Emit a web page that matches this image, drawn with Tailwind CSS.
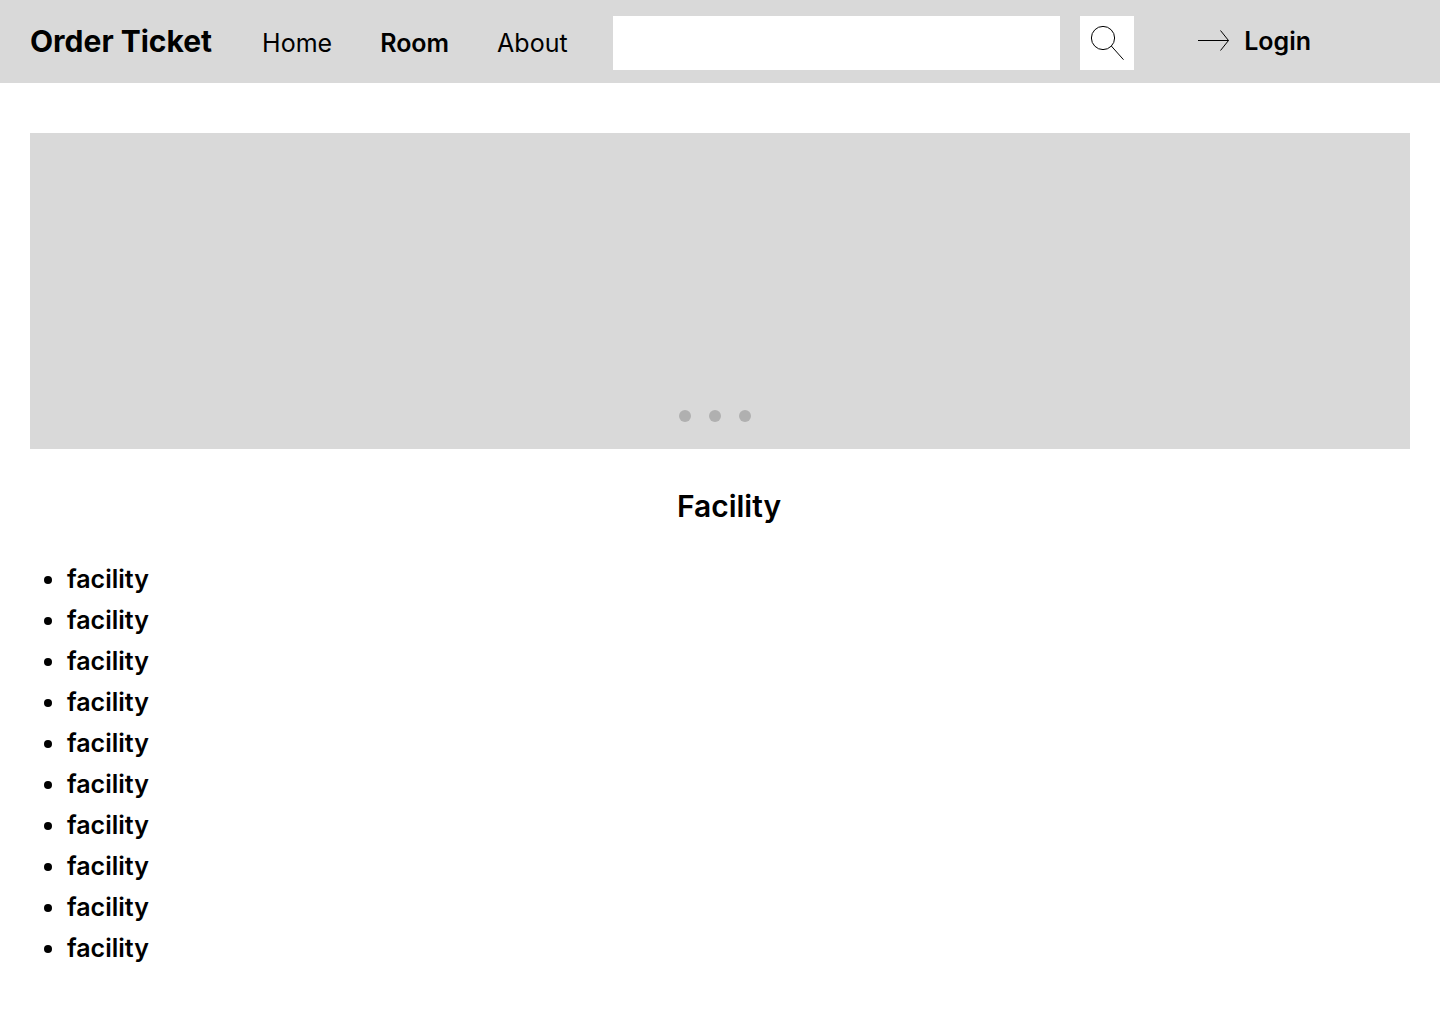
<!DOCTYPE html>
<html lang="en">
<head>
<meta charset="utf-8">
<meta name="viewport" content="width=device-width, initial-scale=1">
<title>Order Ticket</title>
<script src="https://cdn.jsdelivr.net/npm/@tailwindcss/browser@4"></script>
</head>
<body class="bg-white font-['Inter',sans-serif] text-black">
<header class="flex items-start bg-[#d9d9d9] pt-4 pb-[13px] pl-[30px] pr-[129px]">
  <a href="#" class="mt-[7px] shrink-0 text-[30px] leading-9 font-bold">Order Ticket</a>
  <nav class="mt-3 ml-[50px] flex shrink-0 gap-12 text-[25px] leading-[30px]">
    <a href="#">Home</a>
    <a href="#" aria-current="page" class="font-semibold">Room</a>
    <a href="#">About</a>
  </nav>
  <form class="ml-[45px] flex min-w-0 grow gap-5" role="search">
    <input type="search" aria-label="Search" class="h-[54px] min-w-0 grow bg-white px-4 text-[25px] outline-none">
    <button type="submit" aria-label="Search" class="size-[54px] shrink-0 bg-white">
      <svg class="size-full" viewBox="0 0 54 54" fill="none" stroke="black" aria-hidden="true">
        <circle cx="23" cy="22" r="11.6"/>
        <path d="M31.3 30 43.5 43.7"/>
      </svg>
    </button>
  </form>
  <a href="#" class="mt-[10px] ml-16 flex shrink-0 items-center gap-[14px] text-[25px] leading-[30px] font-semibold">
    <svg class="h-[22px] w-8" viewBox="0 0 32 22" fill="none" stroke="black" aria-hidden="true">
      <path d="M0 10.5H30.5M22.5 .5 30.5 10.5 22.5 20.5"/>
    </svg>
    Login
  </a>
</header>
<main class="px-[30px] pt-[50px] pb-12">
  <section aria-label="Carousel" class="flex h-[316px] items-end justify-center gap-[18px] bg-[#d9d9d9] pr-[10px] pb-[27px]">
    <button type="button" aria-label="Slide 1" class="size-3 rounded-full bg-[#b0b0b0]"></button>
    <button type="button" aria-label="Slide 2" class="size-3 rounded-full bg-[#b0b0b0]"></button>
    <button type="button" aria-label="Slide 3" class="size-3 rounded-full bg-[#b0b0b0]"></button>
  </section>
  <h1 class="mt-[39px] pl-[18px] text-center text-[30px] leading-9 font-semibold">Facility</h1>
  <ul class="mt-[35px] list-disc pl-[37px] text-[25px] leading-[41px] font-semibold">
    <li>facility</li>
    <li>facility</li>
    <li>facility</li>
    <li>facility</li>
    <li>facility</li>
    <li>facility</li>
    <li>facility</li>
    <li>facility</li>
    <li>facility</li>
    <li>facility</li>
  </ul>
</main>
</body>
</html>
